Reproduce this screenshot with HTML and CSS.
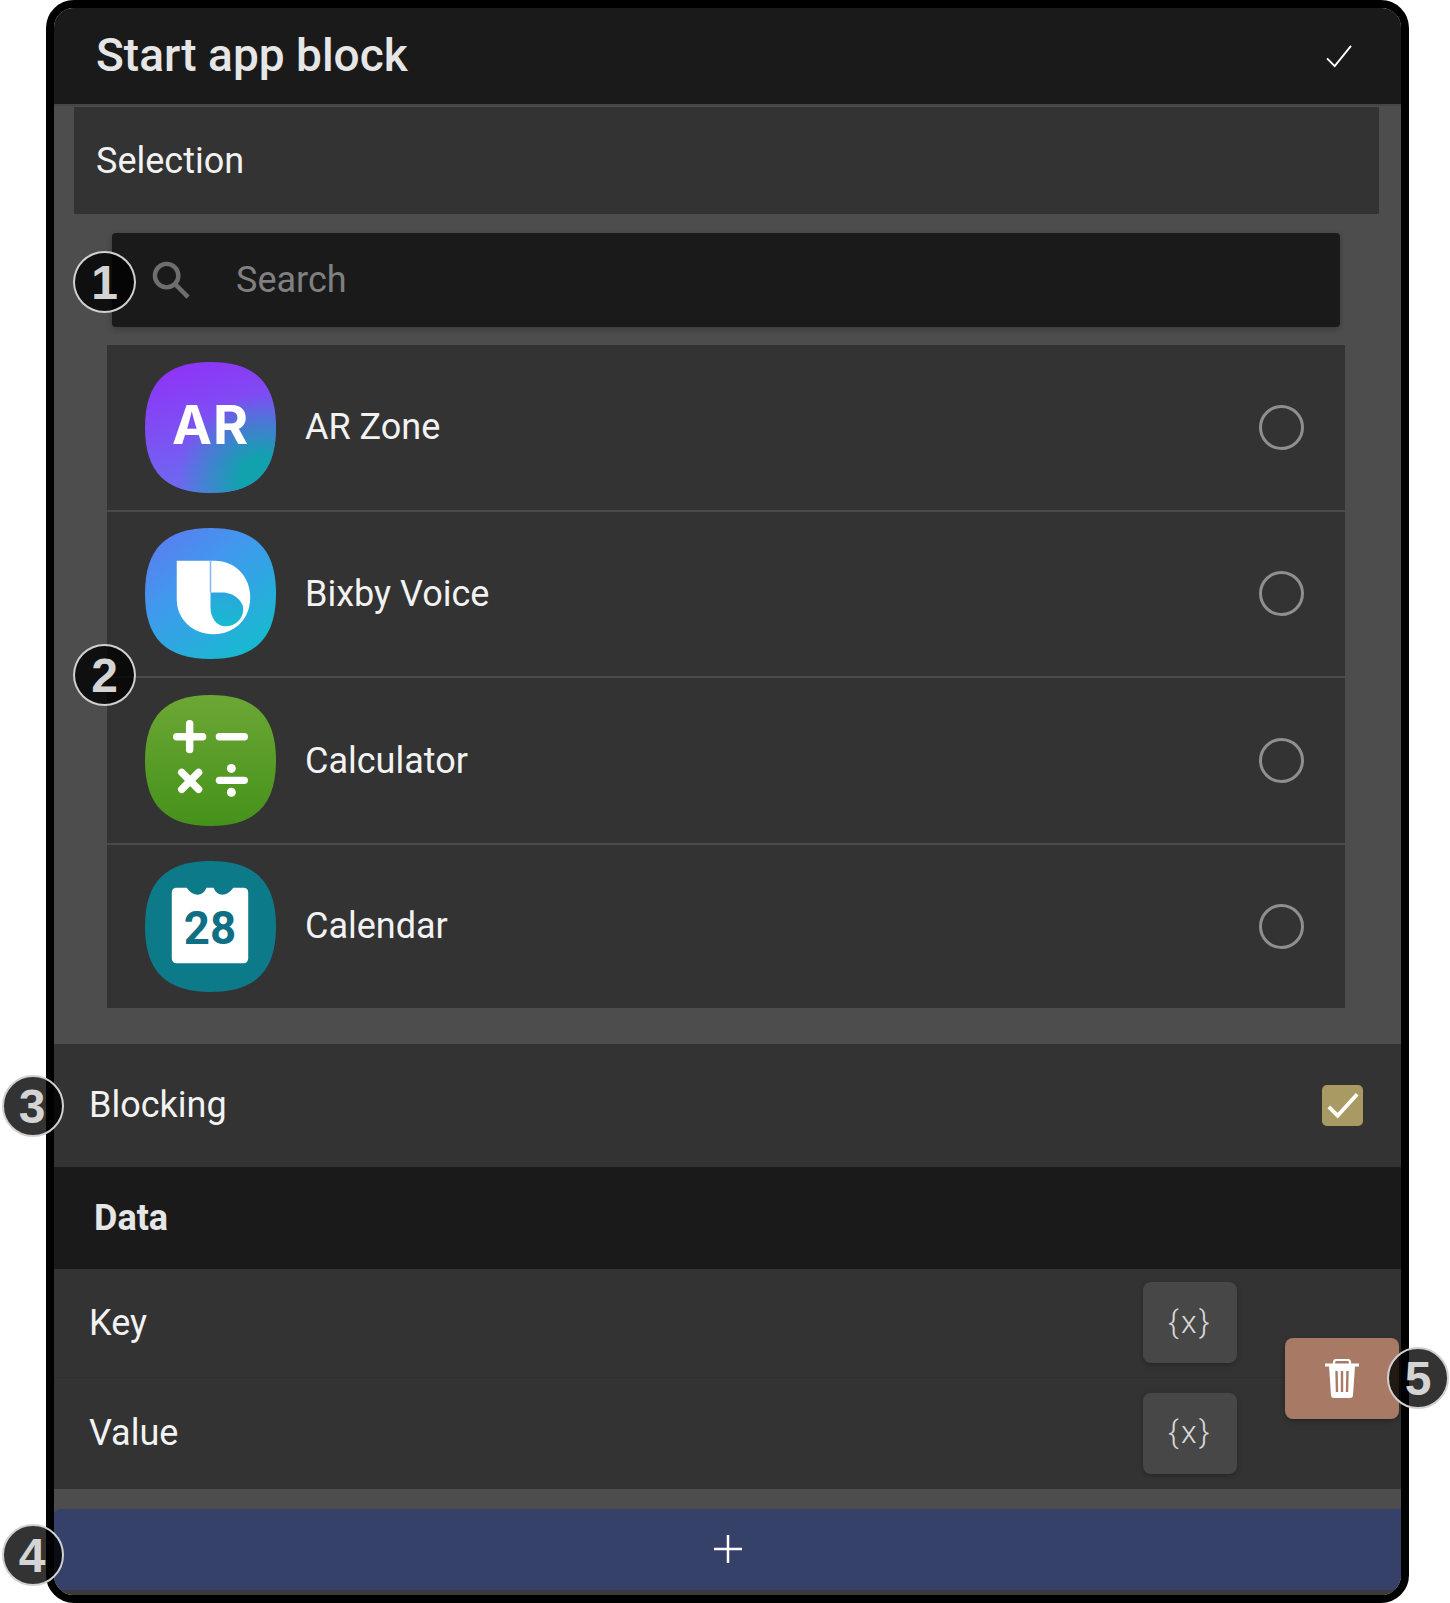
FILE: index.html
```html
<!DOCTYPE html>
<html lang="en">
<head>
    <meta charset="UTF-8">
    <meta name="viewport" content="width=device-width, initial-scale=1.0">
    <title>Start app block</title>
    <link rel="stylesheet" href="styles.css">
</head>
<body>
    <div class="screen">
        <div class="frame">
            <div class="panel">
                <div class="header">
                    <span class="title">Start app block</span>
                    <svg class="header-check" viewBox="0 0 28 24"><path d="M1 14 L9 22 L26 1" /></svg>
                </div>

                <div class="selection">Selection</div>

                <div class="search">
                    <svg class="search-icon" viewBox="0 0 40 40"><circle cx="15" cy="15" r="12" /><path d="M24 24 L37 37" /></svg>
                    <span class="search-text">Search</span>
                </div>

                <div class="app-list">
                    <div class="app-row">
                        <svg class="app-icon" viewBox="0 0 132 132">
                            <defs>
                                <linearGradient id="ar-base" x1="0.1" y1="0" x2="0.4" y2="1">
                                    <stop offset="0" stop-color="#9130f7" />
                                    <stop offset="1" stop-color="#6a6ef0" />
                                </linearGradient>
                                <radialGradient id="ar-teal" gradientUnits="userSpaceOnUse" cx="118" cy="118" r="85">
                                    <stop offset="0.25" stop-color="#10a2ad" />
                                    <stop offset="1" stop-color="#10a2ad" stop-opacity="0" />
                                </radialGradient>
                            </defs>
                            <path d="M66 0 C111 0 132 21 132 66 C132 111 111 132 66 132 C21 132 0 111 0 66 C0 21 21 0 66 0 Z" fill="url(#ar-base)" />
                            <path d="M66 0 C111 0 132 21 132 66 C132 111 111 132 66 132 C21 132 0 111 0 66 C0 21 21 0 66 0 Z" fill="url(#ar-teal)" />
                            <text class="icon-ar" x="66" y="83" text-anchor="middle">AR</text>
                        </svg>
                        <span class="app-name">AR Zone</span>
                        <span class="radio"></span>
                    </div>
                    <div class="app-row">
                        <svg class="app-icon" viewBox="0 0 132 132">
                            <defs>
                                <linearGradient id="bixby" x1="0.1" y1="0" x2="0.85" y2="1">
                                    <stop offset="0" stop-color="#5d7bf1" />
                                    <stop offset="0.4" stop-color="#3f9aed" />
                                    <stop offset="1" stop-color="#13bdcd" />
                                </linearGradient>
                                <linearGradient id="bixby-hole" x1="0" y1="0" x2="0" y2="1">
                                    <stop offset="0" stop-color="#2aa6de" />
                                    <stop offset="1" stop-color="#17bbd0" />
                                </linearGradient>
                            </defs>
                            <path d="M66 0 C111 0 132 21 132 66 C132 111 111 132 66 132 C21 132 0 111 0 66 C0 21 21 0 66 0 Z" fill="url(#bixby)" />
                            <path d="M32 33 H70 C92 33 106 50 106 70 C106 92 90 107 69 107 C48 107 32 92 32 72 Z" fill="#fff" />
                            <path d="M66 65 H78 C90 65 99 74 99 82 C99 92 90 99 81 99 C72 99 66 90 66 80 Z" fill="url(#bixby-hole)" />
                            <path d="M66 33 V65" stroke="#7db8f0" stroke-width="1.5" />
                        </svg>
                        <span class="app-name">Bixby Voice</span>
                        <span class="radio"></span>
                    </div>
                    <div class="app-row">
                        <svg class="app-icon" viewBox="0 0 132 132">
                            <defs>
                                <linearGradient id="calc" x1="0" y1="0" x2="0" y2="1">
                                    <stop offset="0" stop-color="#6ca734" />
                                    <stop offset="1" stop-color="#45921a" />
                                </linearGradient>
                            </defs>
                            <path d="M66 0 C111 0 132 21 132 66 C132 111 111 132 66 132 C21 132 0 111 0 66 C0 21 21 0 66 0 Z" fill="url(#calc)" />
                            <path class="icon-calc" d="M32 42 H58 M45 29 V55 M75 42 H100 M37 78 L54 95 M54 78 L37 95 M75 86 H100" />
                            <circle cx="87" cy="74" r="4.5" fill="#fff" />
                            <circle cx="87" cy="98" r="4.5" fill="#fff" />
                        </svg>
                        <span class="app-name">Calculator</span>
                        <span class="radio"></span>
                    </div>
                    <div class="app-row">
                        <svg class="app-icon" viewBox="0 0 132 132">
                            <path d="M66 0 C111 0 132 21 132 66 C132 111 111 132 66 132 C21 132 0 111 0 66 C0 21 21 0 66 0 Z" fill="#0d7a8a" />
                            <path d="M32 27 H42 Q47 34 53 34 Q59 34 62 27 H69 Q72 34 78 34 Q84 34 89 27 H99 Q104 27 104 32 V98 Q104 103 99 103 H32 Q27 103 27 98 V32 Q27 27 32 27 Z" fill="#fff" />
                            <text class="icon-date" x="65.5" y="83.5" text-anchor="middle">28</text>
                        </svg>
                        <span class="app-name">Calendar</span>
                        <span class="radio"></span>
                    </div>
                </div>

                <div class="blocking">
                    <span>Blocking</span>
                    <span class="checkbox">
                        <svg viewBox="0 0 42 36"><path d="M7 20 L16 29 L36 7" /></svg>
                    </span>
                </div>

                <div class="data-title">Data</div>

                <div class="data-row data-row-key">
                    <span>Key</span>
                    <span class="var-button">{x}</span>
                </div>
                <div class="data-row data-row-value">
                    <span>Value</span>
                    <span class="var-button">{x}</span>
                </div>

                <div class="add-bar">
                    <svg class="add-icon" viewBox="0 0 28 28"><path d="M0 14 H28 M14 0 V28" /></svg>
                </div>
            </div>
        </div>

        <!-- boton que aparece al deslizar la fila -->
        <div class="delete-button">
            <svg viewBox="0 0 34 40">
                <path d="M9 5 V3.5 Q9 1 11.5 1 H22.5 Q25 1 25 3.5 V5" fill="none" stroke="#fff" stroke-width="2.2" />
                <path d="M0 6 H34" stroke="#fff" stroke-width="3" />
                <path d="M4 7 H30 L28 36 Q28 39 25 39 H9 Q6 39 6 36 Z" fill="#fff" />
                <path d="M11.5 12 L12 33 M17 12 V33 M22.5 12 L22 33" stroke="#a87a66" stroke-width="2.4" />
            </svg>
        </div>

        <span class="badge badge-1">1</span>
        <span class="badge badge-2">2</span>
        <span class="badge badge-3">3</span>
        <span class="badge badge-4">4</span>
        <span class="badge badge-5">5</span>
    </div>
</body>
</html>
```

FILE: styles.css
```css
body {
    margin: 0;
    background-color: #fff;
    font-family: Roboto, sans-serif;
}
.screen {
    position: relative;
    width: 1450px;
    height: 1603px;
    overflow: hidden;
}
.frame {
    box-sizing: border-box;
    width: 1363px;
    height: 1603px;
    margin-left: 46px;
    border: 8px solid #000;
    border-radius: 28px;
}
.panel {
    height: 100%;
    background-color: #4d4d4d;
    border-radius: 20px;
    overflow: hidden;
    color: #f2f2f2;
    font-size: 36px;
}
.header {
    box-sizing: border-box;
    height: 98px;
    padding: 0 48px 0 42px;
    background-color: #1a1a1a;
    border-bottom: 2px solid #454545;
    display: flex;
    justify-content: space-between;
    align-items: center;
}
.title {
    padding-bottom: 2px;
    color: #e6e6e6;
    font-size: 46px;
    font-weight: 500;
}
.header-check {
    width: 27px;
    height: 23px;
    fill: none;
    stroke: #fff;
    stroke-width: 2;
}
.selection {
    box-sizing: border-box;
    height: 107px;
    margin: 1px 22px 0 20px;
    padding-left: 22px;
    background-color: #333;
    display: flex;
    align-items: center;
}
.search {
    box-sizing: border-box;
    height: 94px;
    margin: 19px 61px 0 58px;
    padding-left: 40px;
    background-color: #1a1a1a;
    border-radius: 4px;
    box-shadow: 0 2px 6px rgba(0, 0, 0, 0.25);
    display: flex;
    align-items: center;
}
.search-icon {
    width: 39px;
    height: 39px;
    fill: none;
    stroke: #6e6e6e;
    stroke-width: 4.5;
}
.search-text {
    margin-left: 45px;
    color: #808080;
}
.app-list {
    margin: 18px 56px 0 53px;
    background-color: #333;
}
.app-row {
    box-sizing: border-box;
    height: 166.67px;
    padding: 0 41px 0 38px;
    border-bottom: 2px solid #4a4a4a;
    display: flex;
    align-items: center;
}
.app-row:last-child {
    height: 163px;
    border-bottom: none;
}
.app-icon {
    width: 131px;
    height: 131px;
    flex-shrink: 0;
}
.icon-ar {
    fill: #fff;
    font-family: Inter, sans-serif;
    font-size: 54px;
    font-weight: 700;
    letter-spacing: 1px;
}
.icon-calc {
    fill: none;
    stroke: #fff;
    stroke-width: 7.5;
    stroke-linecap: round;
}
.icon-date {
    fill: #0f6f84;
    font-family: Roboto, sans-serif;
    font-size: 46px;
    font-weight: 700;
}
.app-name {
    flex: 1;
    margin-left: 29px;
}
.radio {
    box-sizing: border-box;
    width: 45px;
    height: 45px;
    border: 3.5px solid #8f8f8f;
    border-radius: 50%;
}
.blocking {
    box-sizing: border-box;
    height: 123px;
    margin-top: 36px;
    padding: 0 38px 0 35px;
    background-color: #333;
    display: flex;
    justify-content: space-between;
    align-items: center;
}
.checkbox {
    width: 41px;
    height: 41px;
    background-color: #a89a62;
    border-radius: 5px;
    display: flex;
}
.checkbox svg {
    width: 41px;
    height: 36px;
    margin-top: 2px;
    fill: none;
    stroke: #fff;
    stroke-width: 4;
}
.data-title {
    box-sizing: border-box;
    height: 102px;
    padding-left: 40px;
    background-color: #1a1a1a;
    color: #e6e6e6;
    font-weight: 700;
    display: flex;
    align-items: center;
}
.data-row {
    box-sizing: border-box;
    padding: 0 164px 0 35px;
    background-color: #333;
    display: flex;
    justify-content: space-between;
    align-items: center;
}
.data-row-key {
    height: 109px;
    border-bottom: 1px solid #2e2e2e;
}
.data-row-value {
    height: 111px;
}
.var-button {
    box-sizing: border-box;
    width: 94px;
    height: 81px;
    padding-bottom: 2px;
    background-color: #474747;
    border-radius: 8px;
    box-shadow: 0 2px 5px rgba(0, 0, 0, 0.25);
    color: #d8d8d8;
    font-size: 32px;
    font-weight: 300;
    letter-spacing: 2.5px;
    display: flex;
    justify-content: center;
    align-items: center;
}
.add-bar {
    height: 81px;
    margin-top: 20px;
    background-color: #36416a;
    border-bottom: 5px solid #3a3a3a;
    border-top-left-radius: 6px;
    display: flex;
    justify-content: center;
    align-items: center;
}
.add-icon {
    width: 28px;
    height: 28px;
    fill: none;
    stroke: #fff;
    stroke-width: 2.5;
}
.delete-button {
    position: absolute;
    left: 1285px;
    top: 1338px;
    width: 114px;
    height: 81px;
    background-color: #a87a66;
    border-radius: 8px;
    box-shadow: 0 2px 5px rgba(0, 0, 0, 0.3);
    display: flex;
    justify-content: center;
    align-items: center;
}
.delete-button svg {
    width: 34px;
    height: 40px;
}
.badge {
    position: absolute;
    box-sizing: border-box;
    width: 62px;
    height: 62px;
    border: 2.5px solid #d0d0d0;
    border-radius: 50%;
    background-color: rgba(0, 0, 0, 0.8);
    color: #d4d4d4;
    font-family: "Liberation Sans", Arial, sans-serif;
    font-size: 48px;
    font-weight: 700;
    display: flex;
    justify-content: center;
    align-items: center;
}
.badge-1 {
    left: 73px;
    top: 251px;
    width: 63px;
}
.badge-2 {
    left: 73px;
    top: 644px;
    width: 63px;
}
.badge-3 {
    left: 2px;
    top: 1075px;
    padding-right: 2px;
}
.badge-4 {
    left: 2px;
    top: 1524px;
    padding-right: 2px;
}
.badge-5 {
    left: 1387px;
    top: 1347px;
}
```
